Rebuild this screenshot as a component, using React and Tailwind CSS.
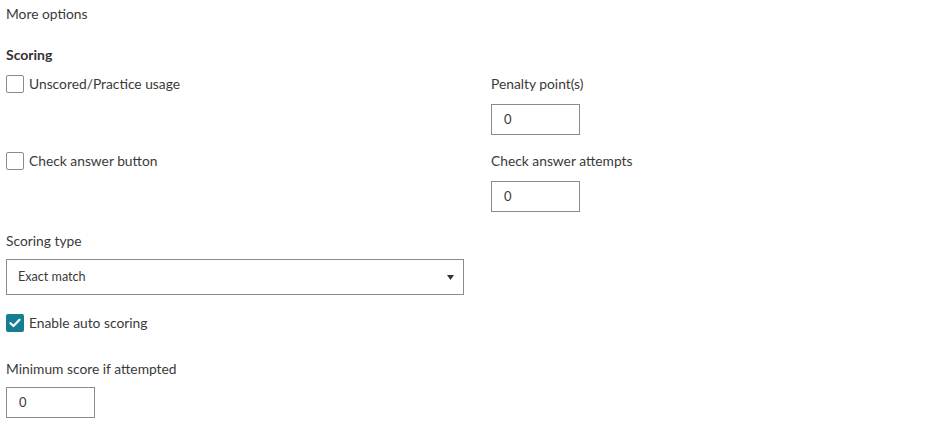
import React from 'react';

const font = { fontFamily: 'Lato, "Open Sans", sans-serif' };

function Box({ checked }) {
  if (checked) {
    return (
      <span className="flex h-[18px] w-[18px] items-center justify-center rounded-[2px] bg-[#177d92]">
        <svg width="12" height="10" viewBox="0 0 12 10" fill="none">
          <path d="M1.5 5.2 4.5 8 10.5 1.8" stroke="#fff" strokeWidth="2.2" strokeLinecap="round" strokeLinejoin="round" />
        </svg>
      </span>
    );
  }
  return <span className="block h-[18px] w-[18px] rounded-[2px] border border-[#8c8c8c] bg-white" />;
}

function Check({ label, checked }) {
  return (
    <label className="flex h-5 items-center gap-[5px] text-[13.8px] leading-5 text-[#3a3a3a]">
      <Box checked={checked} />
      <span>{label}</span>
    </label>
  );
}

function NumberField({ value }) {
  return (
    <div className="flex h-[31px] w-[89px] items-center border border-[#8c8c8c] bg-white pl-[12px] text-[13px] text-[#3a3a3a] lining-nums">
      {value}
    </div>
  );
}

export default function App() {
  return (
    <div className="min-h-[430px] bg-white pl-[6px] pt-[4px] text-[#3a3a3a]" style={font}>
      <div className="h-5 text-[13.8px] leading-5">More options</div>
      <div className="mt-[21px] h-5 text-[14px] font-bold leading-5 text-[#333]">Scoring</div>

      <div className="mt-[9px] grid grid-cols-[485px_1fr] gap-y-[16px]">
        <div>
          <Check label="Unscored/Practice usage" />
        </div>
        <div>
          <div className="h-5 text-[13.8px] leading-5">Penalty point(s)</div>
          <div className="mt-[10px]">
            <NumberField value="0" />
          </div>
        </div>

        <div>
          <Check label="Check answer button" />
        </div>
        <div>
          <div className="h-5 text-[13.8px] leading-5">Check answer attempts</div>
          <div className="mt-[10px]">
            <NumberField value="0" />
          </div>
        </div>
      </div>

      <div className="mt-[19px] h-5 text-[13.8px] leading-5">Scoring type</div>
      <div className="mt-[8px] flex h-[36px] w-[458px] items-center justify-between border border-[#8c8c8c] bg-white pl-[11px] pr-[9px] text-[12.6px]">
        <span>Exact match</span>
        <svg width="7" height="5" viewBox="0 0 7 5">
          <path d="M0 0h7L3.5 5z" fill="#333" />
        </svg>
      </div>

      <div className="mt-[18px]">
        <Check label="Enable auto scoring" checked />
      </div>

      <div className="mt-[26px] h-5 text-[13.8px] leading-5">Minimum score if attempted</div>
      <div className="mt-[8px]">
        <NumberField value="0" />
      </div>
    </div>
  );
}
